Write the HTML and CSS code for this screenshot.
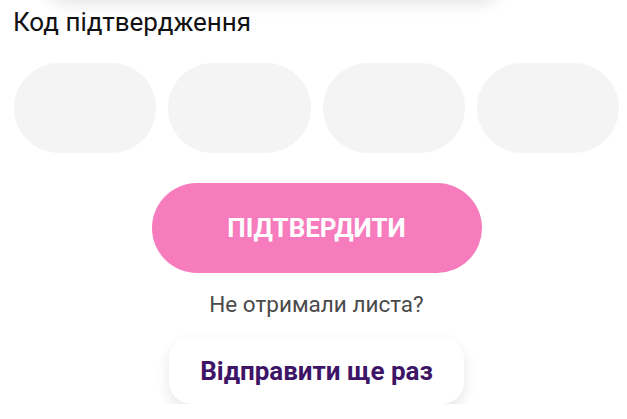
FILE: index.html
```html
<!DOCTYPE html>
<html lang="uk">
<head>
<meta charset="utf-8">
<link rel="stylesheet" href="styles.css">
</head>
<body>
<div class="page">
  <div class="prev-card"></div>
  <div class="label">Код підтвердження</div>
  <div class="code-row">
    <div class="code-box"></div>
    <div class="code-box"></div>
    <div class="code-box"></div>
    <div class="code-box"></div>
  </div>
  <div class="actions">
    <button class="confirm">ПІДТВЕРДИТИ</button>
    <div class="hint">Не отримали листа?</div>
    <button class="resend">Відправити ще раз</button>
  </div>
</div>
</body>
</html>
```

FILE: styles.css
```css
html, body {
  margin: 0;
  padding: 0;
  background: #ffffff;
  font-family: Roboto, "Liberation Sans", sans-serif;
  overflow: hidden;
}
.page {
  width: 605px;
  padding: 0 8px 0 14px;
}
.prev-card {
  height: 40px;
  margin: -40px 0 0 32px;
  width: 455px;
  border-radius: 20px;
  background: #fff;
  box-shadow: 0 4px 16px rgba(0, 0, 0, 0.10);
}
.label {
  margin-top: 7px;
  margin-left: -1px;
  font-size: 26px;
  line-height: 30px;
  color: #111;
}
.code-row {
  display: flex;
  gap: 12px;
  margin-top: 26px;
}
.code-box {
  flex: 1;
  height: 90px;
  border-radius: 45px;
  background: #f4f4f4;
}
.actions {
  display: flex;
  flex-direction: column;
  align-items: center;
}
.confirm {
  margin-top: 30px;
  width: 330px;
  height: 90px;
  border: none;
  border-radius: 45px;
  background: #f67cbd;
  color: #fff;
  font-family: Roboto, "Liberation Sans", sans-serif;
  font-weight: 700;
  font-size: 26px;
  padding: 0;
}
.hint {
  margin-top: 18px;
  font-size: 22.5px;
  line-height: 26px;
  color: #4a4a4a;
}
.resend {
  margin-top: 20px;
  width: 295px;
  height: 67px;
  border: none;
  border-radius: 22px;
  background: #fff;
  box-shadow: 0 6px 14px rgba(0, 0, 0, 0.10);
  color: #3e1566;
  font-family: Roboto, "Liberation Sans", sans-serif;
  font-weight: 700;
  font-size: 26px;
  padding: 0;
}
```
